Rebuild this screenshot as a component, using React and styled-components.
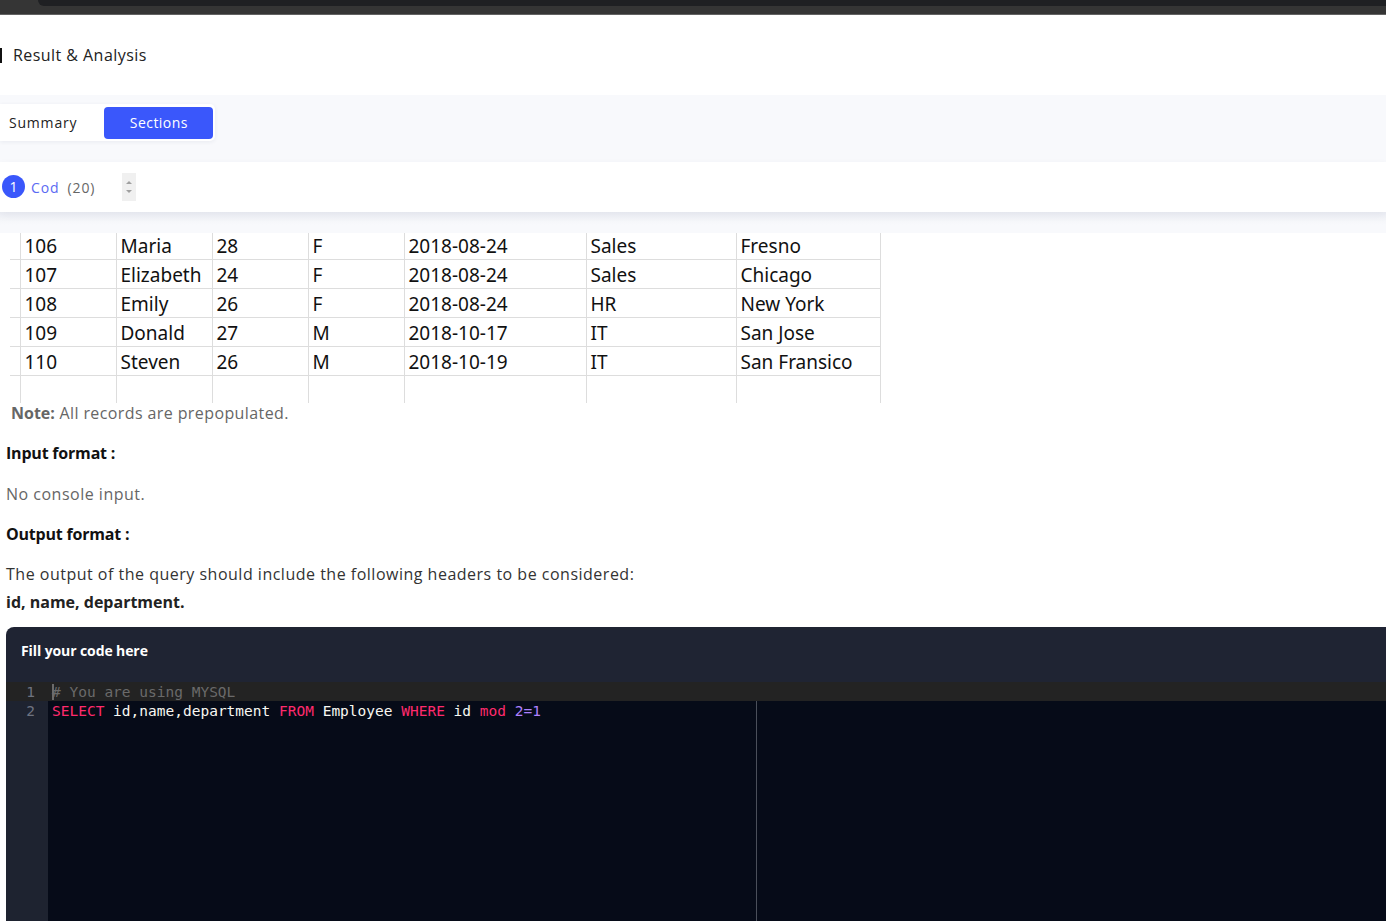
import React from 'react';
import styled, { createGlobalStyle } from 'styled-components';

const GlobalStyle = createGlobalStyle`
  html, body {
    margin: 0;
    padding: 0;
    background: #ffffff;
    overflow: hidden;
  }
  body {
    font-family: "Open Sans", "Noto Sans", sans-serif;
    color: #222;
  }
`;

const Page = styled.div`
  width: 1386px;
  height: 921px;
  overflow: hidden;
`;

const ChromeBar = styled.div`
  height: 14px;
  background: #353535;
  border-bottom: 1px solid #626262;
  display: flex;
  align-items: flex-start;
`;

const ChromeTab = styled.div`
  margin-left: 38px;
  flex: 1;
  height: 6px;
  background: #1f2023;
  border-bottom-left-radius: 7px;
`;

const Header = styled.header`
  height: 80px;
  display: flex;
  align-items: center;
  gap: 11px;
  background: #fff;
`;

const HeaderMark = styled.span`
  width: 2px;
  height: 15px;
  background: #111;
`;

const HeaderTitle = styled.h1`
  margin: 0;
  font-size: 16px;
  font-weight: 400;
  color: #222;
  letter-spacing: 0.45px;
`;

const TabBand = styled.div`
  height: 67px;
  background: #f8f9fc;
  display: flex;
  align-items: flex-start;
  padding-top: 9px;
  box-sizing: border-box;
`;

const TabGroup = styled.div`
  display: flex;
  align-items: center;
  height: 37px;
  padding: 0 2px 0 9px;
  gap: 27px;
  background: #fff;
  border-radius: 0 5px 5px 0;
  box-shadow: 0 1px 4px rgba(30, 40, 80, 0.07);
`;

const Tab = styled.button`
  border: none;
  font-family: "Open Sans", sans-serif;
  font-size: 14px;
  letter-spacing: ${p => (p.$active ? '0.45px' : '0.8px')};
  cursor: pointer;
  height: 32px;
  border-radius: 4px;
  padding: 0;
  width: ${p => (p.$active ? '109px' : 'auto')};
  background: ${p => (p.$active ? '#3a57fb' : 'transparent')};
  color: ${p => (p.$active ? '#fff' : '#222')};
`;

const SectionRow = styled.div`
  height: 50px;
  background: #fff;
  display: flex;
  align-items: center;
  padding-left: 2px;
  position: relative;
  z-index: 1;
  box-shadow: 0 3px 8px rgba(30, 40, 80, 0.06);
`;

const Badge = styled.span`
  width: 23px;
  height: 23px;
  margin-top: -2px;
  border-radius: 50%;
  background: #3a57fb;
  color: #fff;
  font-size: 14px;
  display: flex;
  align-items: center;
  justify-content: center;
  margin-right: 6px;
`;

const SectionName = styled.span`
  font-size: 14px;
  color: #5a6af3;
  letter-spacing: 0.9px;
  margin-right: 8px;
`;

const SectionCount = styled.span`
  font-size: 14px;
  color: #666;
  letter-spacing: 0.9px;
  margin-right: 27px;
`;

const Spinner = styled.div`
  width: 14px;
  height: 28px;
  background: #f0f0f0;
  display: flex;
  flex-direction: column;
  align-items: center;
  justify-content: center;
  gap: 6px;
`;

const Arrow = styled.span`
  width: 0;
  height: 0;
  border-left: 3px solid transparent;
  border-right: 3px solid transparent;
  ${p => (p.$up ? 'border-bottom: 3px solid #a0a0a0;' : 'border-top: 3px solid #a0a0a0;')}
`;

const Gap = styled.div`
  height: 21px;
  background: linear-gradient(#eef0f5, #f8f9fc 60%);
`;

const Content = styled.div`
  background: #fff;
  display: flex;
  flex-direction: column;
`;

const TableWrap = styled.div`
  padding-left: 10px;
`;

const Table = styled.table`
  border-collapse: collapse;
  font-family: "Noto Sans", "Open Sans", sans-serif;
  font-size: 19px;
  color: #111;
`;

const Row = styled.tr`
  height: ${p => (p.$first ? 26 : p.$empty ? 27 : 29)}px;
  border-bottom: ${p => (p.$empty ? 'none' : '1px solid #dddddd')};
  & > td {
    line-height: ${p => (p.$first ? 23 : 25)}px;
    padding-top: ${p => (p.$first ? 2 : 3)}px;
    padding-bottom: ${p => (p.$first ? 1 : 0)}px;
  }
`;

const Cell = styled.td`
  padding: 0 0 0 4px;
  width: ${p => p.$w}px;
  box-sizing: border-box;
  border-left: 1px solid #dddddd;
  border-right: 1px solid #dddddd;
  vertical-align: middle;
  white-space: nowrap;
  &:first-child {
    border-left: none;
  }
`;

const Description = styled.div`
  padding: 0 6px;
  display: flex;
  flex-direction: column;
`;

const Note = styled.p`
  margin: -1px 0 0 5px;
  font-size: 16px;
  color: #666;
  line-height: 22px;
  letter-spacing: 0.4px;
  b {
    font-weight: 700;
    color: #666;
    letter-spacing: 0;
  }
`;

const Heading = styled.h3`
  margin: ${p => p.$top}px 0 0;
  font-size: 16px;
  font-weight: 700;
  color: #111;
  line-height: 22px;
  letter-spacing: -0.2px;
`;

const Text = styled.p`
  margin: ${p => p.$top}px 0 0;
  font-size: 16px;
  color: ${p => p.$color || '#666'};
  font-weight: ${p => (p.$bold ? 700 : 400)};
  letter-spacing: ${p => (p.$bold ? '0' : '0.5px')};
  line-height: 22px;
`;

const Editor = styled.section`
  margin: 14px -40px 0 6px;
  background: #1f2433;
  border-top-left-radius: 8px;
  height: 320px;
  display: flex;
  flex-direction: column;
  overflow: hidden;
`;

const EditorTitle = styled.div`
  height: 55px;
  flex-shrink: 0;
  box-sizing: border-box;
  padding: 14px 0 0 15px;
  font-size: 14px;
  line-height: 19px;
  font-weight: 700;
  color: #fff;
  letter-spacing: -0.1px;
`;

const CodeArea = styled.div`
  flex: 1;
  position: relative;
  display: flex;
  flex-direction: column;
  background: linear-gradient(to right, #1e2330 42px, #060b18 42px);
  font-family: "DejaVu Sans Mono", "Liberation Mono", monospace;
  font-size: 14.5px;
`;

const CodeLine = styled.div`
  height: 19px;
  display: flex;
  align-items: center;
  padding-top: 1px;
  box-sizing: border-box;
  background: ${p => (p.$active ? '#232323' : 'transparent')};
`;

const LineNo = styled.span`
  width: 29px;
  text-align: right;
  color: #6e7380;
  margin-right: 13px;
  flex-shrink: 0;
`;

const Code = styled.span`
  padding-left: 4px;
  white-space: pre;
  color: #f8f8f2;
  position: relative;
`;

const Cursor = styled.span`
  position: absolute;
  left: 4px;
  top: 0;
  bottom: 0;
  width: 2px;
  background: #6b6b6b;
`;

const Tok = styled.span`
  color: ${p => p.$c};
`;

const PrintMargin = styled.div`
  position: absolute;
  left: 750px;
  top: 19px;
  bottom: 0;
  width: 1px;
  background: #4a4f5a;
`;

const widths = [96, 96, 96, 96, 182, 150, 144];

const rows = [
  ['106', 'Maria', '28', 'F', '2018-08-24', 'Sales', 'Fresno'],
  ['107', 'Elizabeth', '24', 'F', '2018-08-24', 'Sales', 'Chicago'],
  ['108', 'Emily', '26', 'F', '2018-08-24', 'HR', 'New York'],
  ['109', 'Donald', '27', 'M', '2018-10-17', 'IT', 'San Jose'],
  ['110', 'Steven', '26', 'M', '2018-10-19', 'IT', 'San Fransico'],
];

const KW = '#ff2a6d';
const NUM = '#ae81ff';

const App = () => {
  return (
    <>
      <GlobalStyle />
      <Page>
        <ChromeBar>
          <ChromeTab />
        </ChromeBar>
        <Header>
          <HeaderMark />
          <HeaderTitle>Result &amp; Analysis</HeaderTitle>
        </Header>
        <TabBand>
          <TabGroup>
            <Tab>Summary</Tab>
            <Tab $active>Sections</Tab>
          </TabGroup>
        </TabBand>
        <SectionRow>
          <Badge>1</Badge>
          <SectionName>Cod</SectionName>
          <SectionCount>(20)</SectionCount>
          <Spinner>
            <Arrow $up />
            <Arrow />
          </Spinner>
        </SectionRow>
        <Gap />
        <Content>
          <TableWrap>
            <Table>
              <tbody>
                {rows.map((r, ri) => (
                  <Row key={ri} $first={ri === 0}>
                    <Cell $w={10} />
                    {r.map((v, i) => (
                      <Cell key={i} $w={widths[i]}>{v}</Cell>
                    ))}
                  </Row>
                ))}
                <Row $empty>
                  <Cell $w={10} />
                  {widths.map((w, i) => (
                    <Cell key={i} $w={w} />
                  ))}
                </Row>
              </tbody>
            </Table>
          </TableWrap>
          <Description>
            <Note><b>Note:</b> All records are prepopulated.</Note>
            <Heading $top={18}>Input format :</Heading>
            <Text $top={19}>No console input.</Text>
            <Heading $top={18}>Output format :</Heading>
            <Text $top={18} $color="#333">The output of the query should include the following headers to be considered:</Text>
            <Text $top={6} $color="#222" $bold>id, name, department.</Text>
          </Description>
          <Editor>
            <EditorTitle>Fill your code here</EditorTitle>
            <CodeArea>
              <CodeLine $active>
                <LineNo>1</LineNo>
                <Code>
                  <Cursor />
                  <Tok $c="#6a6a6a"># You are using MYSQL</Tok>
                </Code>
              </CodeLine>
              <CodeLine>
                <LineNo>2</LineNo>
                <Code>
                  <Tok $c={KW}>SELECT</Tok> id,name,department <Tok $c={KW}>FROM</Tok> Employee{' '}
                  <Tok $c={KW}>WHERE</Tok> id <Tok $c={KW}>mod</Tok> <Tok $c={NUM}>2</Tok>
                  <Tok $c={NUM}>=</Tok><Tok $c={NUM}>1</Tok>
                </Code>
              </CodeLine>
              <PrintMargin />
            </CodeArea>
          </Editor>
        </Content>
      </Page>
    </>
  );
};

export default App;
